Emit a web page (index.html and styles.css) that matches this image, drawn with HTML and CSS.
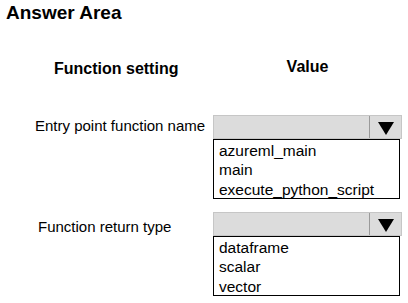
FILE: index.html
```html
<!DOCTYPE html>
<html lang="en">
<head>
    <meta charset="UTF-8">
    <meta name="viewport" content="width=device-width, initial-scale=1.0">
    <title>Answer Area</title>
    <link rel="stylesheet" href="styles.css">
</head>
<body>
    <h3 class="title">Answer Area</h3>
    <div class="heads">
        <div class="headLeft">Function setting</div>
        <div class="headRight">Value</div>
    </div>
    <div class="row first">
        <div class="label">Entry point function name</div>
        <div class="drop">
            <div class="box">
                <span class="arrow"></span>
            </div>
            <ul class="list">
                <li>azureml_main</li>
                <li>main</li>
                <li>execute_python_script</li>
            </ul>
        </div>
    </div>
    <div class="row second">
        <div class="label">Function return type</div>
        <div class="drop">
            <div class="box">
                <span class="arrow"></span>
            </div>
            <ul class="list">
                <li>dataframe</li>
                <li>scalar</li>
                <li>vector</li>
            </ul>
        </div>
    </div>
</body>
</html>
```

FILE: styles.css
```css
body{
    margin: 0;
    background: #fff;
    color: #000;
    font-family: "Liberation Sans", Arial, sans-serif;
}
.title{
    margin: 2px 0 0 6px;
    font-size: 19px;
    line-height: 22px;
    font-weight: bold;
}
.heads{
    display: flex;
    margin-top: 34px;
    font-size: 16px;
    font-weight: bold;
    line-height: 18px;
}
.headLeft{
    width: 213px;
    padding-left: 54px;
    box-sizing: border-box;
    margin-top: 2px;
}
.headRight{
    width: 189px;
    text-align: center;
}
.row{
    display: flex;
    font-size: 15px;
}
.first{
    margin-top: 37px;
}
.second{
    margin-top: 13px;
}
.label{
    width: 213px;
    box-sizing: border-box;
    line-height: 17px;
}
.first .label{
    padding: 2px 0 0 35px;
}
.second .label{
    padding: 6px 0 0 38px;
}
.drop{
    width: 189px;
}
.box{
    height: 24px;
    box-sizing: border-box;
    border: 1px solid #c6c6c6;
    background: #dcdcdc;
    display: flex;
    justify-content: flex-end;
}
.arrow{
    width: 31px;
    border-left: 1px solid #9a9a9a;
    display: flex;
    align-items: center;
    justify-content: center;
}
.arrow::after{
    content: "";
    border-left: 8px solid transparent;
    border-right: 8px solid transparent;
    border-top: 13px solid #000;
    margin-top: 2px;
}
.list{
    list-style: none;
    margin: 0;
    padding: 1px 0 0 5px;
    width: 187px;
    height: 60px;
    box-sizing: border-box;
    border: 1px solid #000;
    font-size: 15.5px;
    line-height: 19.3px;
}
```
